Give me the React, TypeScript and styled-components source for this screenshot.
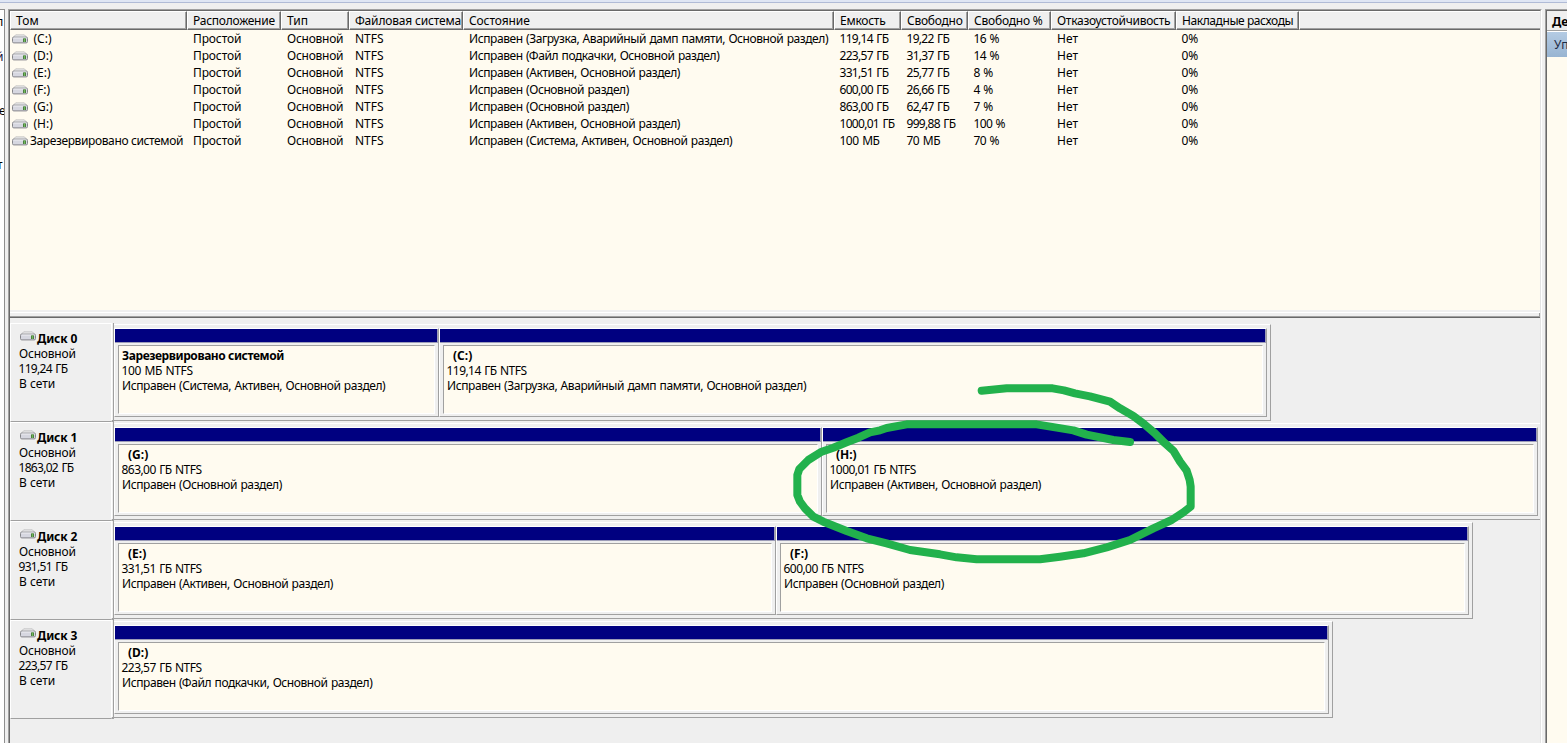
import React from "react";
import styled, { createGlobalStyle } from "styled-components";

const Global = createGlobalStyle`
  * { box-sizing: border-box; }
  html, body { margin: 0; padding: 0; overflow: hidden; }
  body { background: #efefef; font-family: "Noto Sans", "Open Sans", sans-serif; font-size: 12px; color: #000; }
`;

const Window = styled.div`
  position: relative;
  display: flex;
  flex-direction: column;
  width: 1567px;
  height: 743px;
  overflow: hidden;
  background: #efefef;
  white-space: nowrap;
`;
const ToolbarEdge = styled.div`
  flex: none;
  height: 3px;
  margin-bottom: 6px;
  background: #dfe6f4;
  border-bottom: 1px solid #b0bbd6;
`;
const Panes = styled.div`
  display: flex;
  flex: 1;
  min-height: 0;
`;
const TreePane = styled.div`
  width: 5px;
  margin-right: 3px;
  border-top: 1px solid #8e8e8e;
  border-right: 1px solid #8e8e8e;
  background: #fff;
  overflow: hidden;
`;
const TreeText = styled.div<{ $top: number; $hot?: boolean; $shift?: number }>`
  height: 17px;
  line-height: 17px;
  margin-top: ${(p) => p.$top}px;
  margin-left: ${(p) => p.$shift ?? -4}px;
  color: ${(p) => (p.$hot ? "#20103c" : "#000")};
`;
const MainPane = styled.div`
  display: flex;
  flex-direction: column;
  width: 1534px;
  border-left: 1px solid #a0a0a0;
  border-right: 1px solid #fff;
  border-top: 1px solid #a0a0a0;
`;
const MainInner = styled.div`
  flex: 1;
  border-left: 1px solid #696969;
  border-top: 1px solid #696969;
  border-right: 1px solid #e3e3e3;
`;
const columns = "177px 94px 68px 114px 371px 67px 67px 83px 125px 123px 241px";
const HeaderRow = styled.div`
  display: grid;
  grid-template-columns: ${columns};
  height: 19px;
`;
const HeaderCell = styled.div<{ $last?: boolean }>`
  height: 19px;
  padding-left: 5px;
  line-height: 17px;
  border-top: 1px solid #fff;
  border-left: 1px solid #fff;
  border-right: ${(p) => (p.$last ? "none" : "1px solid #696969")};
  border-bottom: 1px solid #696969;
  box-shadow: inset ${(p) => (p.$last ? "0" : "-1px")} -1px 0 #a0a0a0;
`;
const VolumeList = styled.div`
  height: 280px;
  background: #fffbf0;
`;
const VolumeRow = styled.div`
  display: grid;
  grid-template-columns: ${columns};
  height: 17px;
  line-height: 17px;
`;
const Cell = styled.div<{ $track?: number; $pad?: number; $word?: number }>`
  padding-left: ${(p) => p.$pad ?? 6}px;
  letter-spacing: ${(p) => p.$track ?? 0}px;
  word-spacing: ${(p) => p.$word ?? 0}px;
`;
const NameCell = styled.div<{ $wide?: boolean }>`
  display: flex;
  align-items: center;
  gap: ${(p) => (p.$wide ? 2 : 5.5)}px;
  padding-left: 2px;
`;
const Fit = styled.span<{ $track?: number; $bold?: boolean }>`
  letter-spacing: ${(p) => p.$track ?? 0}px;
  font-weight: ${(p) => (p.$bold ? 700 : 400)};
`;
const Splitter = styled.div`
  height: 8px;
  border-top: 2px solid #efefef;
  border-bottom: 1px solid #696969;
  box-shadow: inset 0 1px 0 #fff, inset -1px -1px 0 #a0a0a0;
`;
const DiskArea = styled.div`
  padding-top: 5px;
`;
const DiskRow = styled.div`
  display: flex;
  height: 99px;
`;
const DiskLabel = styled.div`
  width: 101px;
  height: 99px;
  padding: 7px 0 0 8px;
  border-top: 1px solid #fff;
  border-left: 1px solid #fff;
  border-bottom: 1px solid #a0a0a0;
  line-height: 15px;
`;
const DiskTitle = styled.div`
  display: flex;
  height: 15px;
  gap: 1px;
  padding-left: 1px;
`;
const Line = styled.div<{ $track?: number; $shift?: number; $word?: number }>`
  height: 15px;
  line-height: 15px;
  letter-spacing: ${(p) => p.$track ?? 0}px;
  word-spacing: ${(p) => p.$word ?? 0}px;
  margin-left: ${(p) => p.$shift ?? 0}px;
`;
const DiskRule = styled.div`
  width: 3px;
  border-left: 1px solid #fff;
  border-right: 1px solid #a0a0a0;
  border-bottom: 2px solid #a0a0a0;
`;
const Graph = styled.div<{ $width: number; $open?: boolean }>`
  display: flex;
  width: ${(p) => p.$width}px;
  height: 97px;
  margin-top: 1px;
  padding: 3px 0;
  border-top: 1px solid #fff;
  border-bottom: 1px solid #a0a0a0;
  border-right: ${(p) => (p.$open ? "none" : "1px solid #a0a0a0")};
`;
const Partition = styled.div<{ $width: number }>`
  width: ${(p) => p.$width}px;
  height: 89px;
  border: 1px solid #fff;
  border-right-color: #a0a0a0;
  border-bottom-color: #a0a0a0;
`;
const Stripe = styled.div`
  height: 14px;
  background: #000080;
  border-right: 1px solid #9c9cb8;
  border-bottom: 1px solid #9c9cb8;
`;
const Body = styled.div`
  height: 69px;
  margin: 2px 3px 0 3px;
  padding: 2px 0 0 3px;
  background: #fffbf0;
  border-top: 1px solid #a0a0a0;
  border-left: 1px solid #a0a0a0;
  border-right: 1px solid #fff;
  border-bottom: 1px solid #fff;
`;
const PartitionName = styled(Line)<{ $letter: boolean }>`
  padding-left: ${(p) => (p.$letter ? 6 : 0)}px;
`;
const ActionsPane = styled.div`
  width: 22px;
  margin-left: 3px;
  border-top: 1px solid #a0a0a0;
  border-left: 1px solid #a0a0a0;
  overflow: hidden;
`;
const ActionsInner = styled.div`
  height: 100%;
  border-top: 1px solid #696969;
  border-left: 1px solid #696969;
  background: #fffbf0;
`;
const ActionsTitle = styled.div`
  height: 20px;
  padding-left: 5px;
  line-height: 21px;
  font-weight: 700;
  background: #efefef;
  border-bottom: 1px solid #a0a0a0;
`;
const ActionsGroup = styled.div`
  height: 26px;
  padding-left: 7px;
  line-height: 26px;
  color: #1e2b45;
  border-top: 1px solid #fff;
  background: linear-gradient(#b4cbe3, #98b4d2);
`;
const Ink = styled.svg`
  position: absolute;
  left: 780px;
  top: 370px;
  pointer-events: none;
`;
const DriveSvg = styled.svg`
  flex: none;
  display: block;
`;

const Drive = () => (
  <DriveSvg width="16" height="10" viewBox="0 0 16 10">
    <path d="M3.6.9h8.8L15 3.6H1z" fill="#f0f0f0" stroke="#b4b4b6" strokeWidth=".8" />
    <rect x=".5" y="3.1" width="15" height="5.8" rx="1.3" fill="#d6d7e0" stroke="#85868a" />
    <path d="M1.5 4h13" stroke="#efeff2" />
    <rect x="11" y="4.4" width="3" height="3.6" fill="#4c8040" />
    <rect x="12" y="4.4" width="1" height="3.6" fill="#72b85c" />
  </DriveSvg>
);

const headers: [string, number][] = [
  ["Том", 0.15],
  ["Расположение", -0.25],
  ["Тип", 0],
  ["Файловая система", -0.18],
  ["Состояние", -0.1],
  ["Емкость", -0.25],
  ["Свободно", -0.25],
  ["Свободно %", -0.2],
  ["Отказоустойчивость", -0.28],
  ["Накладные расходы", -0.42],
];
const volumes = [
  ["(C:)", "Исправен (Загрузка, Аварийный дамп памяти, Основной раздел)", "119,14 ГБ", "19,22 ГБ", "16 %"],
  ["(D:)", "Исправен (Файл подкачки, Основной раздел)", "223,57 ГБ", "31,37 ГБ", "14 %"],
  ["(E:)", "Исправен (Активен, Основной раздел)", "331,51 ГБ", "25,77 ГБ", "8 %"],
  ["(F:)", "Исправен (Основной раздел)", "600,00 ГБ", "26,66 ГБ", "4 %"],
  ["(G:)", "Исправен (Основной раздел)", "863,00 ГБ", "62,47 ГБ", "7 %"],
  ["(H:)", "Исправен (Активен, Основной раздел)", "1000,01 ГБ", "999,88 ГБ", "100 %"],
  ["Зарезервировано системой", "Исправен (Система, Активен, Основной раздел)", "100 МБ", "70 МБ", "70 %"],
];
type Part = { w: number; name: string; size: string; state: string };
const disks: { size: string; width: number; open?: boolean; parts: Part[] }[] = [
  { size: "119,24 ГБ", width: 1157, parts: [
    { w: 325, name: "Зарезервировано системой", size: "100 МБ NTFS", state: "Исправен (Система, Активен, Основной раздел)" },
    { w: 828, name: "(C:)", size: "119,14 ГБ NTFS", state: "Исправен (Загрузка, Аварийный дамп памяти, Основной раздел)" }] },
  { size: "1863,02 ГБ", width: 1426, open: true, parts: [
    { w: 708, name: "(G:)", size: "863,00 ГБ NTFS", state: "Исправен (Основной раздел)" },
    { w: 716, name: "(H:)", size: "1000,01 ГБ NTFS", state: "Исправен (Активен, Основной раздел)" }] },
  { size: "931,51 ГБ", width: 1359, parts: [
    { w: 662, name: "(E:)", size: "331,51 ГБ NTFS", state: "Исправен (Активен, Основной раздел)" },
    { w: 693, name: "(F:)", size: "600,00 ГБ NTFS", state: "Исправен (Основной раздел)" }] },
  { size: "223,57 ГБ", width: 1219, parts: [
    { w: 1215, name: "(D:)", size: "223,57 ГБ NTFS", state: "Исправен (Файл подкачки, Основной раздел)" }] },
];

const isLetter = (name: string) => name.length === 4;
const sizeTrack = (size: string) => (size.includes(",") ? -0.7 : -0.5);

export default function App() {
  return (
    <>
      <Global />
      <Window>
        <ToolbarEdge />
        <Panes>
          <TreePane>
            <TreeText $top={3}>п</TreeText>
            <TreeText $top={18} $hot>й</TreeText>
            <TreeText $top={37} $shift={-1}>е</TreeText>
            <TreeText $top={37} $shift={-3}>т</TreeText>
          </TreePane>
          <MainPane>
            <MainInner>
              <HeaderRow>
                {headers.map(([title, track]) => (
                  <HeaderCell key={title}><Fit $track={track}>{title}</Fit></HeaderCell>
                ))}
                <HeaderCell $last />
              </HeaderRow>
              <VolumeList>
                {volumes.map(([name, state, cap, free, pct]) => (
                  <VolumeRow key={name}>
                    <NameCell $wide={!isLetter(name)}>
                      <Drive />
                      <Fit $track={isLetter(name) ? 0 : -0.38}>{name}</Fit>
                    </NameCell>
                    <Cell $track={-0.12}>Простой</Cell>
                    <Cell $track={-0.25}>Основной</Cell>
                    <Cell>NTFS</Cell>
                    <Cell $track={-0.42} $word={0.7}>{state}</Cell>
                    <Cell $track={sizeTrack(cap)} $pad={5.5} $word={1}>{cap}</Cell>
                    <Cell $track={sizeTrack(free)} $pad={5.5} $word={1}>{free}</Cell>
                    <Cell $track={-0.65} $pad={5.5} $word={1}>{pct}</Cell>
                    <Cell>Нет</Cell>
                    <Cell $pad={5.5}>0%</Cell>
                  </VolumeRow>
                ))}
              </VolumeList>
              <Splitter />
              <DiskArea>
                {disks.map((d, i) => (
                  <DiskRow key={d.size}>
                    <DiskLabel>
                      <DiskTitle><Drive /><Fit $bold $track={-0.15}>Диск {i}</Fit></DiskTitle>
                      <Line $track={-0.2}>Основной</Line>
                      <Line $track={-0.7} $word={1} $shift={-0.5}>{d.size}</Line>
                      <Line>В сети</Line>
                    </DiskLabel>
                    <DiskRule />
                    <Graph $width={d.width} $open={d.open}>
                      {d.parts.map((p) => (
                        <Partition key={p.name} $width={p.w}>
                          <Stripe />
                          <Body>
                            <PartitionName $letter={isLetter(p.name)}>
                              <Fit $bold $track={isLetter(p.name) ? 0 : -0.42}>{p.name}</Fit>
                            </PartitionName>
                            <Line $track={p.size.includes(",") ? -0.55 : -0.4} $word={0.9} $shift={-0.5}>{p.size}</Line>
                            <Line $track={-0.42} $word={0.7}>{p.state}</Line>
                          </Body>
                        </Partition>
                      ))}
                    </Graph>
                  </DiskRow>
                ))}
              </DiskArea>
            </MainInner>
          </MainPane>
          <ActionsPane>
            <ActionsInner>
              <ActionsTitle>Действия</ActionsTitle>
              <ActionsGroup>Управление дисками</ActionsGroup>
            </ActionsInner>
          </ActionsPane>
        </Panes>
        <Ink width="430" height="200" viewBox="0 0 1290 600" fill="none">
          <path
            d="M605 62L680 55H818L852 61L885 70L930 79L990 95L1020 115L1060 138L1092 162L1125 190L1155 220L1180 242L1200 275L1220 302L1229 330L1232 350V410L1210 427L1175 450L1120 475L1050 510L980 532L910 550L840 560L780 568H590L530 562L480 553L390 540L320 520L260 505L200 483L130 455L100 440L75 415L60 395L52 375V315L58 297L70 285L85 270L125 245L160 233L200 217L235 203L270 187L300 181L320 174L380 163H770L830 173L880 181L920 194L1000 210L1050 216"
            stroke="#22b14c" strokeWidth="24" strokeLinecap="round" strokeLinejoin="round"
          />
        </Ink>
      </Window>
    </>
  );
}
